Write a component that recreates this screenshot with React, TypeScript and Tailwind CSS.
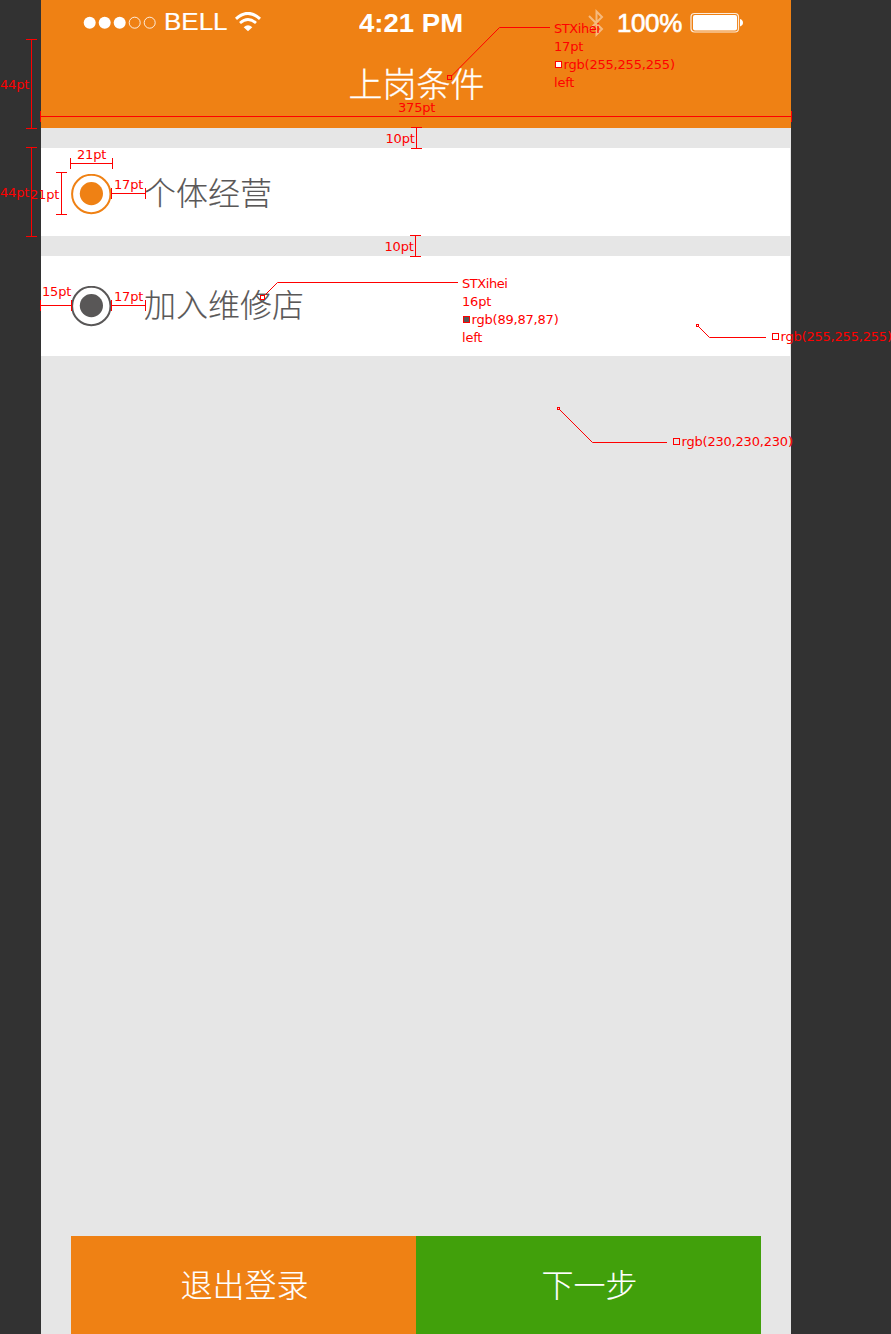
import React from "react";

const RED = "#ff0000";

type LabelProps = { x: number; y: number; children: React.ReactNode };

// Measurement label; y is the top of an 18px line box.
function Label({ x, y, children }: LabelProps) {
  return (
    <span
      className="absolute whitespace-nowrap text-[13px] leading-[18px] tracking-[-0.2px]"
      style={{ left: x, top: y }}
    >
      {children}
    </span>
  );
}

// Stacked lines of a text or colour specification.
function Spec({ x, y, lines }: { x: number; y: number; lines: string[] }) {
  return (
    <div
      className="absolute flex flex-col whitespace-nowrap text-[13px] leading-[18px] tracking-[-0.2px]"
      style={{ left: x, top: y }}
    >
      {lines.map((line) => (
        <span key={line} className={line.startsWith("rgb") ? "pl-[9.5px]" : line === "STXihei" ? "tracking-[-0.45px]" : ""}>
          {line}
        </span>
      ))}
    </div>
  );
}

function VMeasure({ x, y1, y2 }: { x: number; y1: number; y2: number }) {
  return <path d={`M${x - 5} ${y1 + 0.5}h11M${x - 5} ${y2 + 0.5}h11M${x + 0.5} ${y1}V${y2}`} />;
}

function HMeasure({ y, x1, x2 }: { y: number; x1: number; x2: number }) {
  return <path d={`M${x1 + 0.5} ${y - 5}v11M${x2 + 0.5} ${y - 5}v11M${x1} ${y + 0.5}H${x2}`} />;
}

function Swatch({ x, y, fill }: { x: number; y: number; fill: string }) {
  return <rect x={x + 0.5} y={y + 0.5} width="6" height="6" fill={fill} />;
}

function Annotations() {
  return (
    <div className="pointer-events-none absolute inset-0 overflow-hidden font-['DejaVu_Sans',sans-serif] font-normal text-[#ff0000]">
      <svg className="absolute inset-0" width="891" height="1334" fill="none" stroke={RED} strokeWidth="1">
        <VMeasure x={31} y1={39} y2={128} />
        <VMeasure x={31} y1={147} y2={236} />
        <VMeasure x={61} y1={172} y2={214} />
        <VMeasure x={416} y1={127} y2={148} />
        <VMeasure x={415} y1={235} y2={256} />
        <HMeasure y={116} x1={40} x2={791} />
        <HMeasure y={163} x1={70} x2={112} />
        <HMeasure y={193} x1={111} x2={145} />
        <HMeasure y={305} x1={111} x2={145} />
        <HMeasure y={305} x1={40} x2={71} />
        <path d="M451.5 76L499.5 27.5H550" />
        <rect x="447.5" y="75.5" width="4" height="4" />
        <path d="M264.5 295.5L277.5 282.5H458" />
        <rect x="260.5" y="295.5" width="4" height="4" />
        <path d="M698.5 326.5L709.5 337.5H766" />
        <rect x="696.5" y="324.5" width="2" height="2" />
        <path d="M559.5 409.5L592.5 442.5H667" />
        <rect x="557.5" y="407.5" width="2" height="2" />
        <Swatch x={555} y={61} fill="#ffffff" />
        <Swatch x={463} y={316} fill="#595757" />
        <Swatch x={772} y={333} fill="none" />
        <Swatch x={673} y={438} fill="none" />
      </svg>
      <Label x={0} y={76}>44pt</Label>
      <Label x={0} y={184}>44pt</Label>
      <Label x={30} y={186}>21pt</Label>
      <Label x={77} y={146}>21pt</Label>
      <Label x={114} y={176}>17pt</Label>
      <Label x={42} y={283}>15pt</Label>
      <Label x={114} y={288}>17pt</Label>
      <Label x={398} y={99}>375pt</Label>
      <Label x={385.5} y={130}>10pt</Label>
      <Label x={384.5} y={238}>10pt</Label>
      <Spec x={554} y={20} lines={["STXihei", "17pt", "rgb(255,255,255)", "left"]} />
      <Spec x={462} y={275} lines={["STXihei", "16pt", "rgb(89,87,87)", "left"]} />
      <Spec x={771} y={328} lines={["rgb(255,255,255)"]} />
      <Spec x={672} y={433} lines={["rgb(230,230,230)"]} />
    </div>
  );
}

function StatusBar() {
  return (
    <div className="flex h-[45px] items-start whitespace-nowrap text-white font-['Liberation_Sans',sans-serif] font-normal">
      <svg className="ml-[42px] mt-4 shrink-0" width="76" height="14">
        <g fill="#fff">
          <circle cx="6.7" cy="6.7" r="6" />
          <circle cx="21.7" cy="6.7" r="6" />
          <circle cx="36.7" cy="6.7" r="6" />
        </g>
        <g fill="none" stroke="#fff" strokeOpacity="0.85">
          <circle cx="51.7" cy="6.7" r="5.5" />
          <circle cx="66.7" cy="6.7" r="5.5" />
        </g>
      </svg>
      <div className="ml-[5px] mt-2 w-[66px] origin-left scale-x-[1.13] text-[23px] leading-7 [-webkit-text-stroke:0.2px_#fff]">BELL</div>
      <svg className="ml-1 mt-3 shrink-0" width="28" height="20" fill="none" stroke="#fff">
        <path d="M2 6.8Q14-4 26 6.8" strokeWidth="3" />
        <path d="M6 11Q14 4 22 11" strokeWidth="2.8" />
        <path d="M9.7 15.2Q14 11.4 18.3 15.2L14 19.3z" fill="#fff" stroke="none" />
      </svg>
      <div className="ml-[97px] mt-[9px] w-[106px] origin-left scale-x-[1.06] text-[26px] font-bold leading-7">4:21 PM</div>
      <svg className="ml-[123px] mt-[9px] shrink-0" width="17" height="28" fill="none" stroke="#fff" strokeOpacity="0.45" strokeWidth="2">
        <path d="M1 7L14 20L8.5 25.5V2.5L14 8L1 21" />
      </svg>
      <div className="ml-[12px] mt-[9px] w-[68px] text-[26px] leading-7 tracking-[-0.4px] [-webkit-text-stroke:0.6px_#fff]">100%</div>
      <svg className="ml-[5px] mt-3 shrink-0" width="56" height="22">
        <rect x="1" y="1.5" width="47.5" height="18.5" rx="3.5" fill="none" stroke="#fff" strokeOpacity="0.85" strokeWidth="1.2" />
        <rect x="3" y="3" width="44" height="15.5" rx="2" fill="#fff" />
        <path d="M50 7Q53 8 53 10.7T50 14.4z" fill="#fff" />
      </svg>
    </div>
  );
}

function Radio({ color }: { color: string }) {
  return (
    <svg className="shrink-0" width="41" height="41">
      <circle cx="20.3" cy="20" r="19.2" fill="none" stroke={color} strokeWidth="2" />
      <circle cx="20.4" cy="19.6" r="11.6" fill={color} />
    </svg>
  );
}

export default function App() {
  return (
    <div className="relative h-[1334px] w-[891px] overflow-hidden bg-[#323232] font-['Noto_Sans_CJK_SC',sans-serif] font-light">
      <main className="ml-[41px] flex h-full w-[750px] flex-col bg-[#e6e6e6]">
        <header className="h-32 bg-[#ef8114]">
          <StatusBar />
          <h1 className="pl-px text-center text-[34px] leading-[76px] text-white [-webkit-text-stroke:0.3px_#fff]">上岗条件</h1>
        </header>
        <div className="mt-5 flex h-[88px] w-[749px] items-center bg-white pl-[30px] pt-1 text-[32px] text-[#595757]">
          <Radio color="#ef8114" />
          <span className="ml-8 pb-1.5 [-webkit-text-stroke:0.15px_#595757]">个体经营</span>
        </div>
        <div className="mt-5 flex h-[100px] w-[749px] items-center bg-white pl-[30px] text-[32px] text-[#595757]">
          <Radio color="#595757" />
          <span className="ml-8 pb-1.5 [-webkit-text-stroke:0.15px_#595757]">加入维修店</span>
        </div>
        <div className="mx-[30px] mt-auto flex h-[98px] text-[32px] leading-[94px] text-white [-webkit-text-stroke:0.15px_#fff]">
          <button className="flex-1 bg-[#ef8114] pb-1 pl-0.5">退出登录</button>
          <button className="flex-1 bg-[#41a00b] pb-1 pl-0.5">下一步</button>
        </div>
      </main>
      <Annotations />
    </div>
  );
}
